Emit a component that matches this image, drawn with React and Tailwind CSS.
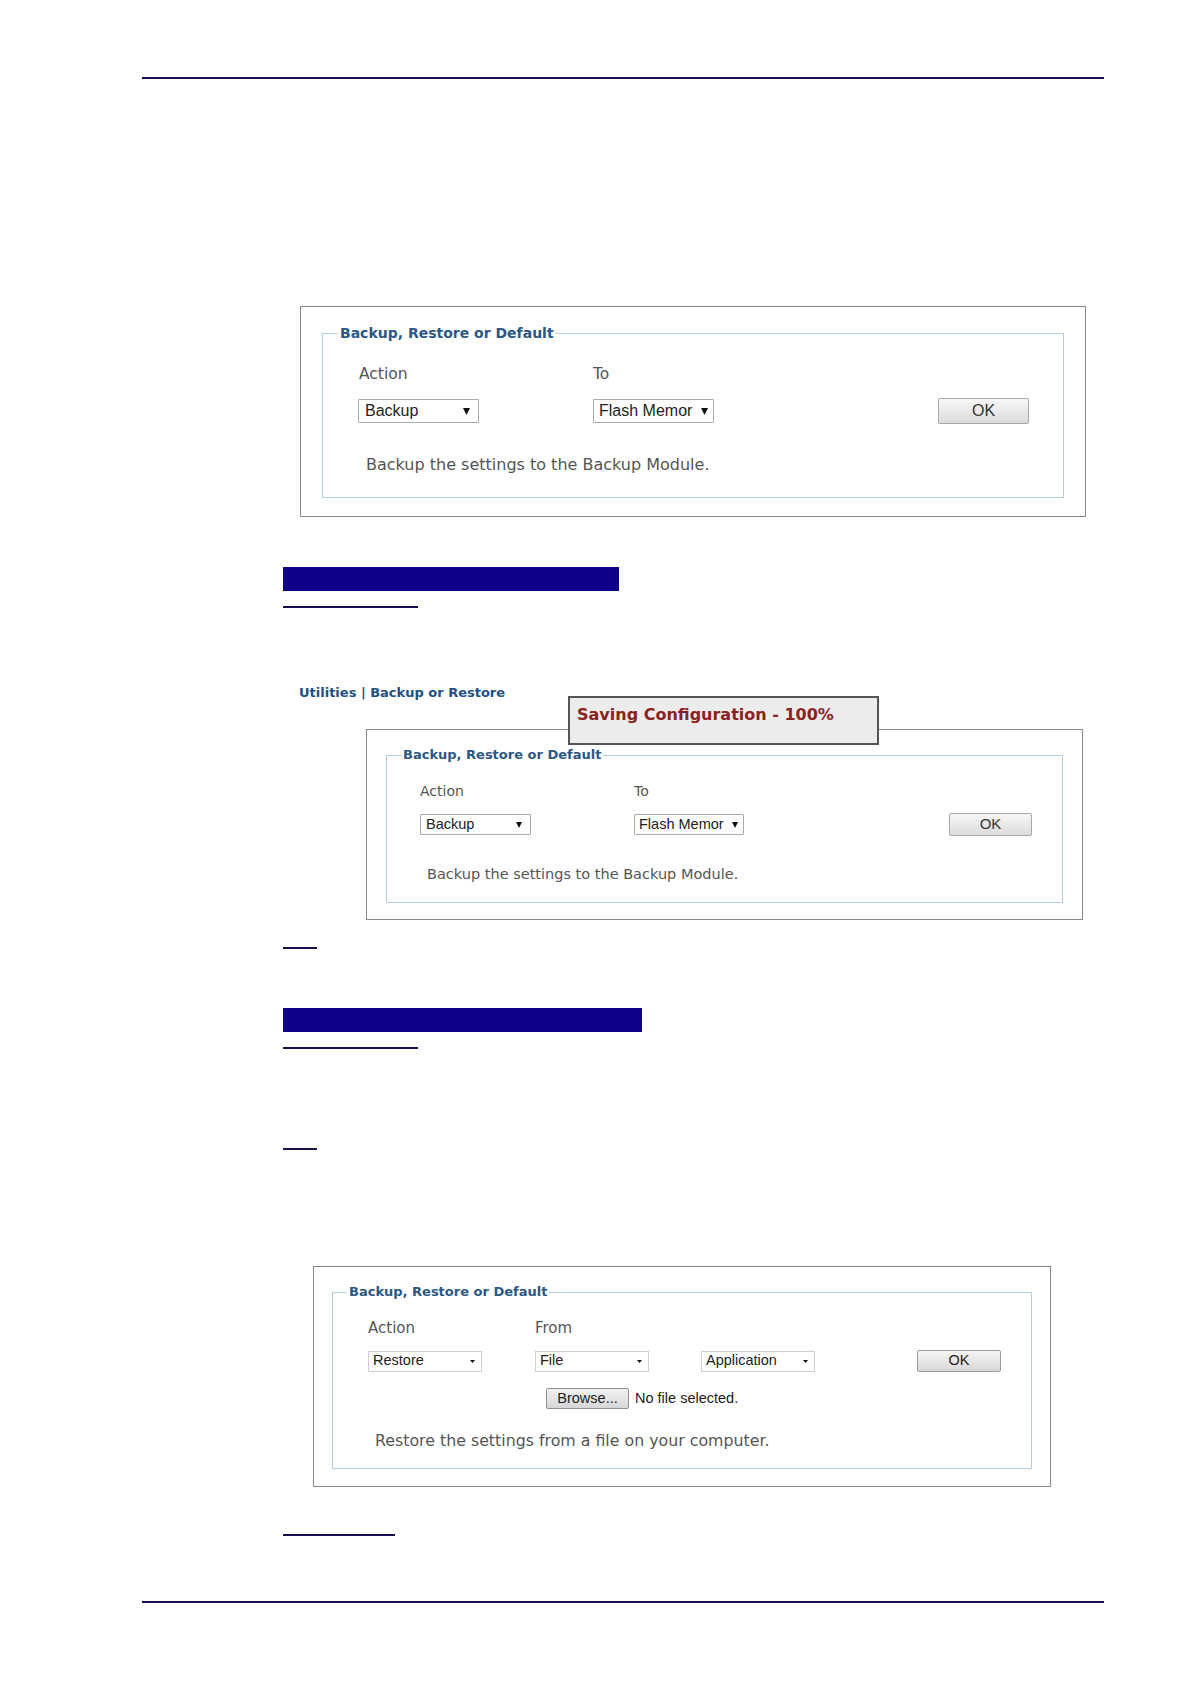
import React from "react";

const sans = "font-['DejaVu_Sans',sans-serif]";
const arial = "font-['Liberation_Sans',Arial,sans-serif]";

function Tri({ w, h }) {
  return (
    <svg width={w} height={h} viewBox={`0 0 ${w} ${h}`} className="shrink-0">
      <polygon points={`0,0 ${w},0 ${w / 2},${h}`} fill="#111" />
    </svg>
  );
}

export default function App() {
  return (
    <div className="w-[1190px] h-[1684px] bg-white flex flex-col overflow-hidden">
      {/* top rule */}
      <div className="mt-[77px] ml-[142px] w-[962px] h-[2px] bg-[#17104f]" />

      {/* Box 1 */}
      <div className="mt-[227px] ml-[300px] w-[786px] h-[211px] border border-[#8a8a8a] flex flex-col">
        <div className="relative mt-[26px] ml-[21px] w-[742px] h-[165px] border border-[#b4cce4] flex flex-col">
          <div className={`absolute left-[15px] -top-[10px] px-[2px] bg-white text-[14px] leading-[18px] font-bold text-[#2b5885] ${sans}`}>
            Backup, Restore or Default
          </div>
          <div className={`mt-[31px] pl-[35px] flex h-[20px] items-center text-[15.5px] text-[#555] ${sans}`}>
            <div className="w-[235px] pl-[1px]">Action</div>
            <div>To</div>
          </div>
          <div className="mt-[13px] pl-[35px] flex h-[26px] items-center">
            <div className={`w-[121px] h-[24px] border border-[#aaaaaa] rounded-[1px] bg-white flex items-center justify-between pl-[6px] pr-[8px] text-[16px] text-[#222] ${arial}`}>
              <span>Backup</span>
              <Tri w={7} h={7} />
            </div>
            <div className={`ml-[114px] w-[121px] h-[24px] border border-[#aaaaaa] rounded-[1px] bg-white flex items-center justify-between pl-[5px] pr-[5px] text-[16px] text-[#222] ${arial}`}>
              <span>Flash Memor</span>
              <Tri w={7} h={7} />
            </div>
            <div className={`ml-[224px] w-[91px] h-[26px] border border-[#a8a8a8] rounded-[2px] bg-linear-to-b from-[#f7f7f7] to-[#dcdcdc] flex items-center justify-center text-[16px] text-[#333] ${arial}`}>
              OK
            </div>
          </div>
          <div className={`mt-[31px] pl-[43px] h-[20px] flex items-center text-[16px] text-[#555] ${sans}`}>
            Backup the settings to the Backup Module.
          </div>
        </div>
      </div>

      {/* bar 1 */}
      <div className="mt-[50px] ml-[283px] w-[336px] h-[24px] bg-[#0f0088]" />
      <div className="mt-[15px] ml-[283px] w-[135px] h-[2px] bg-[#17104f]" />

      {/* Box 2 section */}
      <div className="relative mt-[77px] flex flex-col">
        <div className={`ml-[299px] h-[16px] leading-[16px] text-[13px] font-bold text-[#215081] ${sans}`}>
          Utilities | Backup or Restore
        </div>
        <div className="mt-[28px] ml-[366px] w-[717px] h-[191px] border border-[#8a8a8a] flex flex-col">
          <div className="relative mt-[25px] ml-[19px] w-[677px] h-[148px] border border-[#b4cce4] flex flex-col">
            <div className={`absolute left-[14px] -top-[9px] px-[2px] bg-white text-[13px] leading-[16px] font-bold text-[#2b5885] ${sans}`}>
              Backup, Restore or Default
            </div>
            <div className={`mt-[26px] pl-[33px] flex h-[18px] items-center text-[14px] text-[#555] ${sans}`}>
              <div className="w-[214px]">Action</div>
              <div>To</div>
            </div>
            <div className="mt-[13px] pl-[33px] flex h-[23px] items-center">
              <div className={`w-[111px] h-[21px] border border-[#aaaaaa] rounded-[1px] bg-white flex items-center justify-between pl-[5px] pr-[8px] text-[14.5px] text-[#222] ${arial}`}>
                <span>Backup</span>
                <Tri w={6} h={6} />
              </div>
              <div className={`ml-[103px] w-[110px] h-[21px] border border-[#aaaaaa] rounded-[1px] bg-white flex items-center justify-between pl-[4px] pr-[5px] text-[14.5px] text-[#222] ${arial}`}>
                <span>Flash Memor</span>
                <Tri w={6} h={6} />
              </div>
              <div className={`ml-[205px] w-[83px] h-[23px] border border-[#a8a8a8] rounded-[2px] bg-linear-to-b from-[#f7f7f7] to-[#dcdcdc] flex items-center justify-center text-[15px] text-[#333] ${arial}`}>
                OK
              </div>
            </div>
            <div className={`mt-[30px] pl-[40px] h-[18px] flex items-center text-[14.5px] text-[#555] ${sans}`}>
              Backup the settings to the Backup Module.
            </div>
          </div>
        </div>
        {/* popup overlay */}
        <div className="absolute left-[568px] top-[11px] w-[311px] h-[49px] border-2 border-[#555555] bg-[#ececec] pl-[7px] pt-[7px]">
          <div className={`text-[16px] leading-[20px] font-bold text-[#8b2222] ${sans}`}>
            Saving Configuration - 100%
          </div>
        </div>
      </div>

      <div className="mt-[27px] ml-[283px] w-[34px] h-[2px] bg-[#17104f]" />

      {/* bar 2 */}
      <div className="mt-[59px] ml-[283px] w-[359px] h-[24px] bg-[#0f0088]" />
      <div className="mt-[15px] ml-[283px] w-[135px] h-[2px] bg-[#17104f]" />
      <div className="mt-[99px] ml-[283px] w-[34px] h-[2px] bg-[#17104f]" />

      {/* Box 3 */}
      <div className="mt-[116px] ml-[313px] w-[738px] h-[221px] border border-[#8a8a8a] flex flex-col">
        <div className="relative mt-[25px] ml-[18px] w-[700px] h-[177px] border border-[#b4cce4] flex flex-col">
          <div className={`absolute left-[14px] -top-[9px] px-[2px] bg-white text-[13px] leading-[16px] font-bold text-[#2b5885] ${sans}`}>
            Backup, Restore or Default
          </div>
          <div className={`mt-[25px] pl-[35px] flex h-[20px] items-center text-[15px] text-[#555] ${sans}`}>
            <div className="w-[167px]">Action</div>
            <div>From</div>
          </div>
          <div className="mt-[12px] pl-[35px] flex h-[22px] items-center">
            <div className={`w-[114px] h-[21px] border border-[#cfcfcf] bg-white flex items-center justify-between pl-[4px] pr-[6px] text-[14.5px] text-[#222] ${arial}`}>
              <span>Restore</span>
              <Tri w={5} h={3} />
            </div>
            <div className={`ml-[53px] w-[114px] h-[21px] border border-[#cfcfcf] bg-white flex items-center justify-between pl-[4px] pr-[6px] text-[14.5px] text-[#222] ${arial}`}>
              <span>File</span>
              <Tri w={5} h={3} />
            </div>
            <div className={`ml-[52px] w-[114px] h-[21px] border border-[#cfcfcf] bg-white flex items-center justify-between pl-[4px] pr-[6px] text-[14.5px] text-[#222] ${arial}`}>
              <span>Application</span>
              <Tri w={5} h={3} />
            </div>
            <div className={`ml-[102px] w-[84px] h-[22px] border border-[#9a9a9a] rounded-[2px] bg-linear-to-b from-[#f5f5f5] to-[#d8d8d8] flex items-center justify-center text-[14.5px] text-[#222] ${arial}`}>
              OK
            </div>
          </div>
          <div className="mt-[16px] pl-[213px] flex h-[21px] items-center">
            <div className={`w-[83px] h-[21px] border border-[#8f8f8f] rounded-[2px] bg-linear-to-b from-[#f3f3f3] to-[#d6d6d6] flex items-center justify-center text-[14.5px] text-[#222] ${arial}`}>
              Browse...
            </div>
            <div className={`ml-[6px] text-[14.5px] text-[#222] ${arial}`}>No file selected.</div>
          </div>
          <div className={`mt-[22px] pl-[42px] h-[20px] flex items-center text-[15.8px] text-[#555] ${sans}`}>
            Restore the settings from a file on your computer.
          </div>
        </div>
      </div>

      <div className="mt-[47px] ml-[283px] w-[112px] h-[2px] bg-[#17104f]" />

      {/* bottom rule */}
      <div className="mt-[65px] ml-[142px] w-[962px] h-[2px] bg-[#17104f]" />
    </div>
  );
}
